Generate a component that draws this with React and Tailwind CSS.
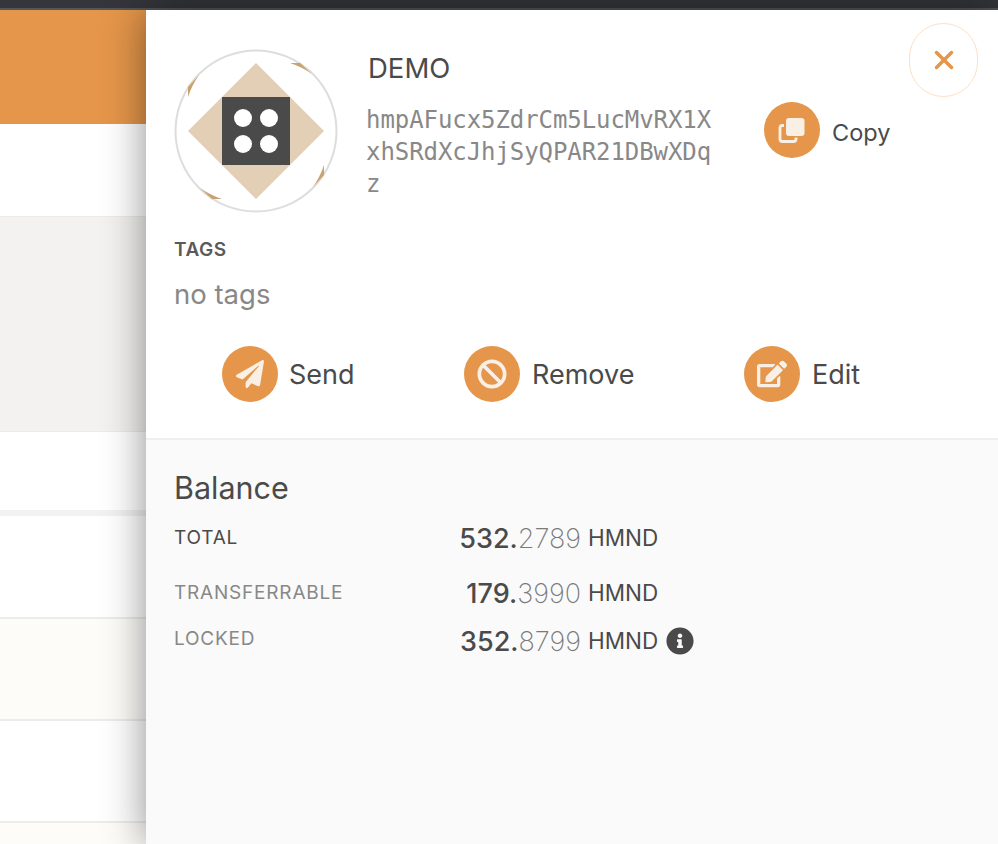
import React from 'react'
import { FaPaperPlane, FaBan, FaEdit, FaInfoCircle } from 'react-icons/fa'
import { X } from 'lucide-react'

const leftRows = [
  'h-[114px] bg-[#e5964a]',
  'h-[92px] bg-white',
  'h-[216px] bg-[#f3f2f0] border-t border-b border-[#ebebe9]',
  'h-[78px] bg-white',
  'h-[6px] bg-[#f3f2f0]',
  'h-[101px] bg-white',
  'h-[102px] bg-[#fdfcf9] border-t-2 border-[#ececea]',
  'h-[102px] bg-white border-t-2 border-[#ececea]',
  'h-[23px] bg-[#fdfcf9] border-t-2 border-[#ececea]',
]

function Avatar() {
  return (
    <svg width="164" height="164" viewBox="0 0 164 164" className="shrink-0">
      <circle cx="82" cy="82" r="80.5" fill="white" stroke="#dddddd" strokeWidth="2" />
      <path d="M82 14 L150 82 L82 150 L14 82 Z" fill="#e2cfb6" />
      <rect x="48" y="48" width="68" height="68" fill="#4a4a4a" />
      <circle cx="69" cy="69" r="9" fill="white" />
      <circle cx="95" cy="69" r="9" fill="white" />
      <circle cx="69" cy="95" r="9" fill="white" />
      <circle cx="95" cy="95" r="9" fill="white" />
      <path d="M14 48 L14 38 L25 26 Q18 36 14 48 Z" fill="#c9a26d" />
      <path d="M116 14 L126 14 L138 25 Q128 18 116 14 Z" fill="#c9a26d" />
      <path d="M150 116 L150 126 L139 138 Q146 128 150 116 Z" fill="#c9a26d" />
      <path d="M48 150 L38 150 L26 139 Q36 146 48 150 Z" fill="#c9a26d" />
    </svg>
  )
}

function CopyIcon() {
  return (
    <svg width="30" height="30" viewBox="0 0 30 30" fill="none">
      <path d="M7 10.5 H5.5 A2.5 2.5 0 0 0 3 13 V24 A2.5 2.5 0 0 0 5.5 26.5 H16.5 A2.5 2.5 0 0 0 19 24 V22.5" stroke="#f9efe5" strokeWidth="2.8" />
      <rect x="9" y="3" width="18.5" height="18" rx="3" fill="#f9efe5" />
    </svg>
  )
}

function Action({ icon, label, className }) {
  return (
    <div className={`flex items-center gap-3 ${className || ''}`}>
      <div className="w-14 h-14 rounded-full bg-[#e5964a] flex items-center justify-center text-[#f9efe5] shrink-0">
        {icon}
      </div>
      <span className="text-[27px] leading-none text-[#4a4a4a]">{label}</span>
    </div>
  )
}

function BalanceRow({ label, whole, decimals, labelClass, info, className }) {
  return (
    <div className={`flex items-center ${className}`}>
      <div className={`w-[266px] -mt-[2px] text-[19px] tracking-[0.8px] leading-none ${labelClass}`}>{label}</div>
      <div className="w-[141px] text-right text-[27px] leading-none text-[#4a4a4a] font-medium">
        {whole}<span className="font-extralight text-[#7a7a7a]">{decimals}</span>
      </div>
      <span className="ml-[7px] text-[22.5px] leading-none text-[#4a4a4a]">HMND</span>
      {info && <FaInfoCircle size={28} className="ml-2 text-[#4a4a4a]" />}
    </div>
  )
}

export default function App() {
  return (
    <div className="w-[998px] h-[844px] overflow-hidden bg-white flex flex-col" style={{ fontFamily: 'Inter, sans-serif' }}>
      <div className="h-[10px] shrink-0 bg-[#35363b] border-b-2 border-[#55565a]" />
      <div className="flex flex-1 min-h-0">
        <div className="w-[146px] shrink-0 flex flex-col">
          {leftRows.map((row, i) => (
            <div key={i} className={`shrink-0 box-border ${row}`} />
          ))}
        </div>

        <div className="relative flex-1 flex flex-col bg-white shadow-[0_0_40px_rgba(0,0,0,0.45)]">
          <button className="absolute right-[20px] top-[13px] w-[69px] h-[74px] rounded-full border border-[#fbe0c6] flex items-center justify-center text-[#e5964a]">
            <X size={30} strokeWidth={2.8} />
          </button>

          <div className="pl-7 pt-[39px] h-[430px] shrink-0 box-border border-b-2 border-[#efefef]">
            <div className="flex">
              <Avatar />
              <div className="ml-[29px] pt-[3px] w-[350px]">
                <div className="ml-px text-[27.5px] leading-[32px] text-[#4a4a4a]">DEMO</div>
                <div className="mt-5 -ml-px text-[24px] leading-[32px] tracking-[-0.07px] text-[#888888] break-all" style={{ fontFamily: '"DejaVu Sans Mono", monospace' }}>
                  hmpAFucx5ZdrCm5LucMvRX1XxhSRdXcJhjSyQPAR21DBwXDqz
                </div>
              </div>
              <div className="ml-[47px] mt-[53px] self-start flex items-center gap-3">
                <div className="w-14 h-14 rounded-full bg-[#e5964a] flex items-center justify-center">
                  <CopyIcon />
                </div>
                <span className="mt-[6px] text-[23.5px] leading-none text-[#4a4a4a]">Copy</span>
              </div>
            </div>

            <div className="mt-[26px] text-[19px] leading-[22px] tracking-[0.5px] font-semibold text-[#5a5a5a]">TAGS</div>
            <div className="mt-[17px] text-[27.5px] leading-[32px] text-[#888888]">no tags</div>

            <div className="mt-9 flex">
              <Action className="ml-12 w-[242px] gap-[11px]" label="Send" icon={<FaPaperPlane size={28} />} />
              <Action className="w-[280px]" label="Remove" icon={<FaBan size={30} />} />
              <Action label="Edit" icon={<FaEdit size={30} />} />
            </div>
          </div>

          <div className="flex-1 bg-[#fafafa] pl-7 pt-[28px]">
            <div className="text-[30.5px] leading-[40px] text-[#4a4a4a]">Balance</div>
            <BalanceRow className="mt-[14px] h-[32px]" label="TOTAL" whole="532." decimals="2789" labelClass="text-[#4a4a4a]" />
            <BalanceRow className="mt-[23px] h-[32px]" label="TRANSFERRABLE" whole="179." decimals="3990" labelClass="text-[#888888]" />
            <BalanceRow className="mt-[16px] h-[32px]" label="LOCKED" whole="352." decimals="8799" labelClass="text-[#888888] -mt-[5px]" info />
          </div>
        </div>
      </div>
    </div>
  )
}
